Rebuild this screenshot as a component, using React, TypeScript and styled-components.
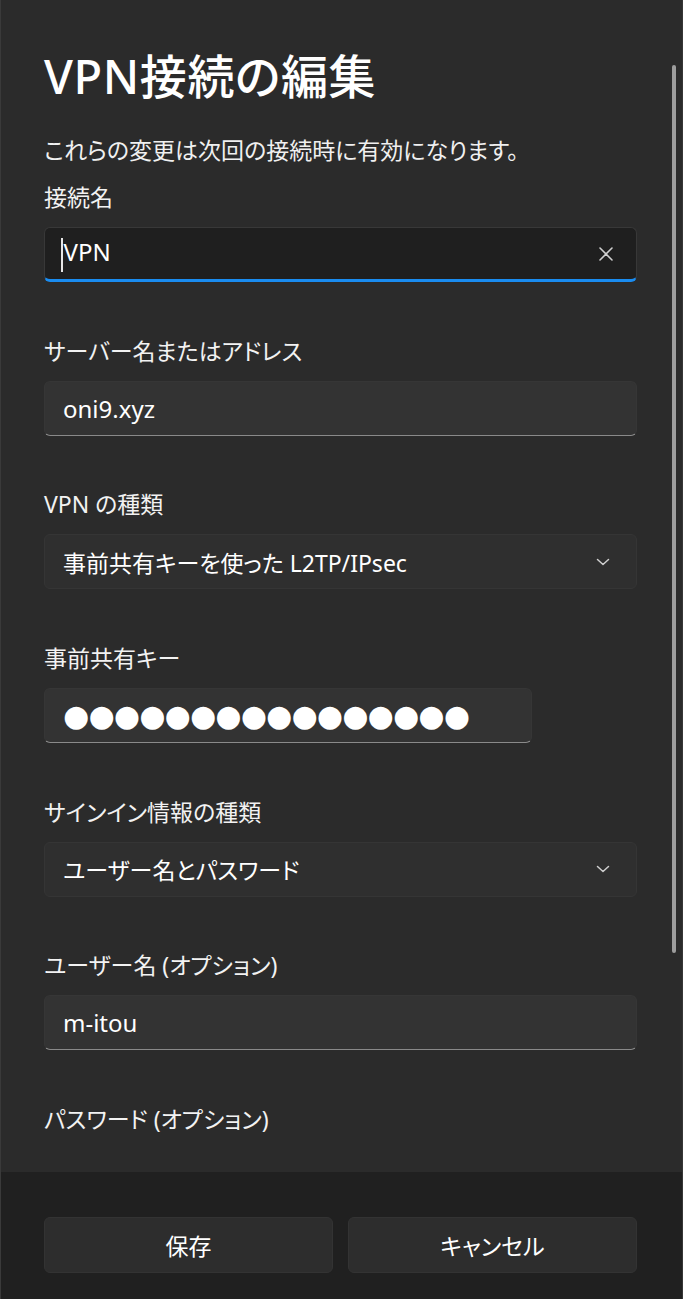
import React from "react";
import styled, { createGlobalStyle } from "styled-components";

const Global = createGlobalStyle`
  html, body { margin: 0; padding: 0; background: #2b2b2b; }
  body {
    font-family: "Noto Sans", "Noto Sans CJK JP", sans-serif;
    color: #ffffff;
    font-feature-settings: "palt";
  }
  * { box-sizing: border-box; }
`;

const Dialog = styled.div`
  width: 683px;
  height: 1299px;
  display: flex;
  flex-direction: column;
  background: #2b2b2b;
  border-left: 1px solid #3a3a3a;
  border-right: 1px solid #363636;
  overflow: hidden;
`;

const Content = styled.div`
  position: relative;
  flex: 1;
  overflow: hidden;
  padding: 47px 45px 0 43px;
  display: flex;
  flex-direction: column;
`;

const ScrollThumb = styled.div`
  position: absolute;
  right: 6px;
  top: 65px;
  width: 4px;
  height: 888px;
  border-radius: 2px;
  background: #9d9d9d;
`;

const Title = styled.h1`
  margin: 0;
  font-size: 47px;
  line-height: 58px;
  font-weight: 500;
  letter-spacing: 0.6px;
`;

const Description = styled.p`
  margin: 30px 0 0;
  font-size: 23px;
  line-height: 30px;
  color: #f0f0f0;
`;

const Fields = styled.div`
  margin-top: 17px;
  display: flex;
  flex-direction: column;
  gap: 53.7px;
`;

const Field = styled.div`
  display: flex;
  flex-direction: column;
  gap: 15px;
`;

const Label = styled.div`
  font-size: 23px;
  line-height: 30px;
  color: #f2f2f2;
`;

const Box = styled.div<{ $focused?: boolean; $width?: number }>`
  height: 55px;
  width: ${(p) => (p.$width ? `${p.$width}px` : "100%")};
  display: flex;
  align-items: center;
  padding: 0 22px 0 18px;
  border-radius: 6px;
  font-size: 24px;
  color: #ffffff;
  background: ${(p) => (p.$focused ? "#1f1f1f" : "#333333")};
  border: 1px solid ${(p) => (p.$focused ? "#383838" : "#363636")};
  border-bottom: ${(p) => (p.$focused ? "3px solid #1a8cf0" : "1.5px solid #8a8a8a")};
`;

const SelectBox = styled.div`
  height: 55px;
  width: 100%;
  display: flex;
  align-items: center;
  justify-content: space-between;
  padding: 0 26px 0 18px;
  border-radius: 6px;
  font-size: 23px;
  color: #ffffff;
  background: #2f2f2f;
  border: 1px solid #353535;
`;

const Value = styled.span`
  flex: 1;
  white-space: nowrap;
`;

const Caret = styled.span`
  display: inline-block;
  width: 1.5px;
  height: 34px;
  background: #e6e6e6;
  vertical-align: middle;
  margin: 0 1px 0 -2px;
`;

const Dots = styled.span`
  font-family: "DejaVu Sans", sans-serif;
  font-size: 30px;
  letter-spacing: -0.8px;
  color: #ffffff;
  white-space: nowrap;
  font-feature-settings: normal;
`;

const Footer = styled.div`
  height: 127px;
  background: #202020;
  padding: 45px 45px 0 43px;
  display: grid;
  grid-template-columns: 1fr 1fr;
  column-gap: 15px;
  align-content: start;
`;

const Button = styled.button`
  height: 56px;
  border-radius: 6px;
  background: #2d2d2d;
  border: 1px solid #333333;
  color: #ffffff;
  font-family: inherit;
  font-size: 23px;
  font-feature-settings: "palt";
`;

const ClearIcon = () => (
  <svg width="16" height="16" viewBox="0 0 16 16" fill="none">
    <path d="M2 2L14 14M14 2L2 14" stroke="#cfcfcf" strokeWidth="1.6" strokeLinecap="round" />
  </svg>
);

const Chevron = () => (
  <svg width="14" height="8" viewBox="0 0 14 8" fill="none">
    <path d="M1.5 1.5L7 6.5L12.5 1.5" stroke="#cfcfcf" strokeWidth="1.5" strokeLinecap="round" strokeLinejoin="round" />
  </svg>
);

export default function App() {
  return (
    <>
      <Global />
      <Dialog>
        <Content>
          <ScrollThumb />
          <Title>VPN接続の編集</Title>
          <Description>これらの変更は次回の接続時に有効になります。</Description>
          <Fields>
            <Field>
              <Label>接続名</Label>
              <Box $focused>
                <Value>
                  <Caret />
                  VPN
                </Value>
                <ClearIcon />
              </Box>
            </Field>
            <Field>
              <Label>サーバー名またはアドレス</Label>
              <Box>
                <Value>oni9.xyz</Value>
              </Box>
            </Field>
            <Field>
              <Label>VPN の種類</Label>
              <SelectBox>
                <Value>事前共有キーを使った L2TP/IPsec</Value>
                <Chevron />
              </SelectBox>
            </Field>
            <Field>
              <Label>事前共有キー</Label>
              <Box $width={488}>
                <Dots>{"●".repeat(16)}</Dots>
              </Box>
            </Field>
            <Field>
              <Label>サインイン情報の種類</Label>
              <SelectBox>
                <Value>ユーザー名とパスワード</Value>
                <Chevron />
              </SelectBox>
            </Field>
            <Field>
              <Label>ユーザー名 (オプション)</Label>
              <Box>
                <Value>m-itou</Value>
              </Box>
            </Field>
            <Field>
              <Label>パスワード (オプション)</Label>
            </Field>
          </Fields>
        </Content>
        <Footer>
          <Button>保存</Button>
          <Button>キャンセル</Button>
        </Footer>
      </Dialog>
    </>
  );
}
